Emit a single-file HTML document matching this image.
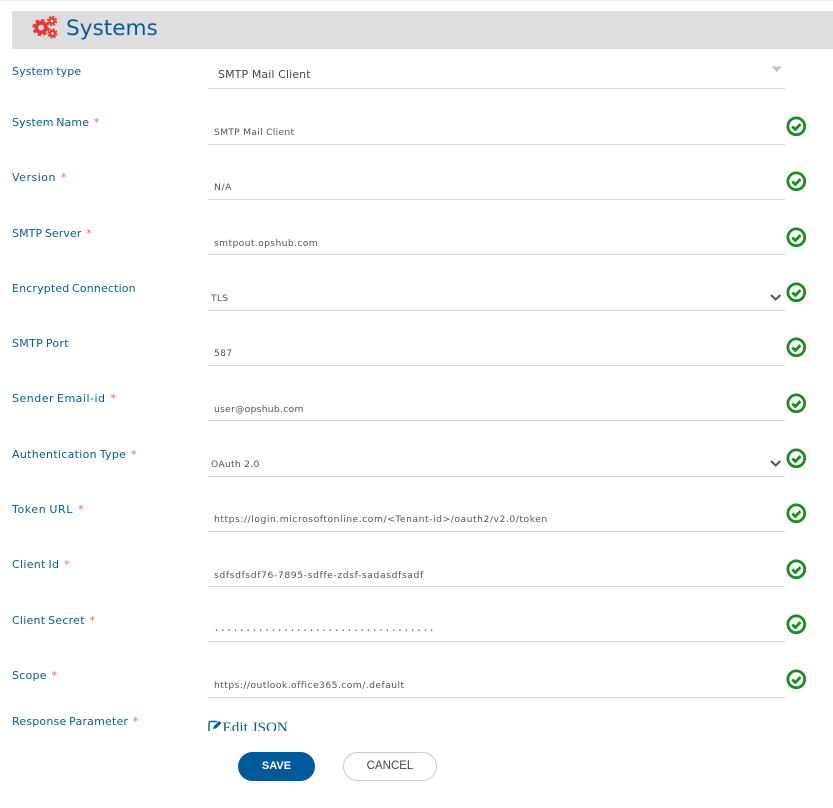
<!DOCTYPE html>
<html><head><meta charset="utf-8">
<style>
html,body{margin:0;padding:0;background:#fff;width:833px;height:808px;overflow:hidden}
body{position:relative;font-family:"DejaVu Sans","Liberation Sans",sans-serif}
.a{position:absolute;white-space:nowrap}
.l{left:12px;font-size:11px;line-height:14px;color:#0d5a96;letter-spacing:.1px;word-spacing:-1px}
.l b{font-weight:normal;color:#e66;margin-left:2px}
.v{left:214px;font-size:9.2px;line-height:12px;color:#555;letter-spacing:.27px}
.s{left:208px;width:577px;height:1px;background:#d6d6d6}
.c{left:786px;width:21px;height:21px}
.d{left:769px;width:14px;height:9px}
</style></head><body>
<div class="a" style="left:0;top:0;width:833px;height:1px;background:#eee"></div>
<div class="a" style="left:12px;top:11px;width:821px;height:38px;background:#dedede"></div>
<svg class="a" style="left:30px;top:14px" width="32" height="28" viewBox="0 0 32 28" fill="none" stroke="#e53935">
<circle cx="11" cy="13.5" r="4.8" stroke-width="3.8"/><circle cx="11" cy="13.5" r="7.4" stroke-width="2.4" stroke-dasharray="3.3 2.5"/>
<circle cx="22" cy="7" r="2.5" stroke-width="2.2"/><circle cx="22" cy="7" r="4.3" stroke-width="1.6" stroke-dasharray="2.1 1.3"/>
<circle cx="22.5" cy="19.5" r="2.5" stroke-width="2.2"/><circle cx="22.5" cy="19.5" r="4.3" stroke-width="1.6" stroke-dasharray="2.1 1.3"/>
</svg>
<div class="a" style="left:66px;top:14px;font-size:21.6px;line-height:30px;color:#0d5a96;font-family:'DejaVu Sans',sans-serif">Systems</div>

<div class="a l" style="top:65px">System type</div>
<div class="a" style="left:218px;top:68px;font-size:11px;line-height:14px;color:#444;letter-spacing:.1px">SMTP Mail Client</div>
<svg class="a" style="left:771px;top:66px" width="12" height="7"><path d="M0.5 0.5H11L5.7 6Z" fill="#c4c4c4"/></svg>
<div class="a s" style="top:88px"></div>

<div class="a l" style="top:116px">System Name <b>*</b></div>
<div class="a v" style="top:127px">SMTP Mail Client</div>
<div class="a s" style="top:144px"></div>
<svg class="a c" style="top:116px" viewBox="0 0 21 21"><circle cx="10.3" cy="10.3" r="8.4" fill="#fff" stroke="#1e8a24" stroke-width="2.8"/><path d="M6.3 10.5l3 3 5.2-5.4" fill="none" stroke="#1e8a24" stroke-width="2.8"/></svg>

<div class="a l" style="top:171px;letter-spacing:.5px">Version <b>*</b></div>
<div class="a v" style="top:182px;letter-spacing:.6px">N/A</div>
<div class="a s" style="top:199px"></div>
<svg class="a c" style="top:171px" viewBox="0 0 21 21"><circle cx="10.3" cy="10.3" r="8.4" fill="#fff" stroke="#1e8a24" stroke-width="2.8"/><path d="M6.3 10.5l3 3 5.2-5.4" fill="none" stroke="#1e8a24" stroke-width="2.8"/></svg>

<div class="a l" style="top:227px">SMTP Server <b>*</b></div>
<div class="a v" style="top:238px;letter-spacing:.37px">smtpout.opshub.com</div>
<div class="a s" style="top:254px"></div>
<svg class="a c" style="top:227px" viewBox="0 0 21 21"><circle cx="10.3" cy="10.3" r="8.4" fill="#fff" stroke="#1e8a24" stroke-width="2.8"/><path d="M6.3 10.5l3 3 5.2-5.4" fill="none" stroke="#1e8a24" stroke-width="2.8"/></svg>

<div class="a l" style="top:282px;letter-spacing:.15px">Encrypted Connection</div>
<div class="a v" style="top:293px;left:211px">TLS</div>
<svg class="a d" style="top:293px" viewBox="0 0 14 9"><path d="M2 2l4.7 4.5L11.4 2" fill="none" stroke="#555" stroke-width="2"/></svg>
<div class="a s" style="top:310px"></div>
<svg class="a c" style="top:282px" viewBox="0 0 21 21"><circle cx="10.3" cy="10.3" r="8.4" fill="#fff" stroke="#1e8a24" stroke-width="2.8"/><path d="M6.3 10.5l3 3 5.2-5.4" fill="none" stroke="#1e8a24" stroke-width="2.8"/></svg>

<div class="a l" style="top:337px;letter-spacing:.3px">SMTP Port</div>
<div class="a v" style="top:348px">587</div>
<div class="a s" style="top:365px"></div>
<svg class="a c" style="top:337px" viewBox="0 0 21 21"><circle cx="10.3" cy="10.3" r="8.4" fill="#fff" stroke="#1e8a24" stroke-width="2.8"/><path d="M6.3 10.5l3 3 5.2-5.4" fill="none" stroke="#1e8a24" stroke-width="2.8"/></svg>

<div class="a l" style="top:392px;letter-spacing:.5px">Sender Email-id <b>*</b></div>
<div class="a v" style="top:404px;letter-spacing:.28px">user@opshub.com</div>
<div class="a s" style="top:420px"></div>
<svg class="a c" style="top:393px" viewBox="0 0 21 21"><circle cx="10.3" cy="10.3" r="8.4" fill="#fff" stroke="#1e8a24" stroke-width="2.8"/><path d="M6.3 10.5l3 3 5.2-5.4" fill="none" stroke="#1e8a24" stroke-width="2.8"/></svg>

<div class="a l" style="top:448px;letter-spacing:.3px">Authentication Type <b>*</b></div>
<div class="a v" style="top:459px;left:211px">OAuth 2.0</div>
<svg class="a d" style="top:459px" viewBox="0 0 14 9"><path d="M2 2l4.7 4.5L11.4 2" fill="none" stroke="#555" stroke-width="2"/></svg>
<div class="a s" style="top:476px"></div>
<svg class="a c" style="top:448px" viewBox="0 0 21 21"><circle cx="10.3" cy="10.3" r="8.4" fill="#fff" stroke="#1e8a24" stroke-width="2.8"/><path d="M6.3 10.5l3 3 5.2-5.4" fill="none" stroke="#1e8a24" stroke-width="2.8"/></svg>

<div class="a l" style="top:503px;letter-spacing:.6px">Token URL <b>*</b></div>
<div class="a v" style="top:514px;letter-spacing:.54px">https://login.microsoftonline.com/&lt;Tenant-id&gt;/oauth2/v2.0/token</div>
<div class="a s" style="top:531px"></div>
<svg class="a c" style="top:503px" viewBox="0 0 21 21"><circle cx="10.3" cy="10.3" r="8.4" fill="#fff" stroke="#1e8a24" stroke-width="2.8"/><path d="M6.3 10.5l3 3 5.2-5.4" fill="none" stroke="#1e8a24" stroke-width="2.8"/></svg>

<div class="a l" style="top:558px;letter-spacing:.3px">Client Id <b>*</b></div>
<div class="a v" style="top:570px;letter-spacing:.61px">sdfsdfsdf76-7895-sdffe-zdsf-sadasdfsadf</div>
<div class="a s" style="top:586px"></div>
<svg class="a c" style="top:559px" viewBox="0 0 21 21"><circle cx="10.3" cy="10.3" r="8.4" fill="#fff" stroke="#1e8a24" stroke-width="2.8"/><path d="M6.3 10.5l3 3 5.2-5.4" fill="none" stroke="#1e8a24" stroke-width="2.8"/></svg>

<div class="a l" style="top:614px;letter-spacing:.25px">Client Secret <b>*</b></div>
<div class="a" style="left:215px;top:625px;font-size:5px;line-height:12px;color:#555;letter-spacing:3.38px">•••••••••••••••••••••••••••••••••••</div>
<div class="a s" style="top:641px"></div>
<svg class="a c" style="top:614px" viewBox="0 0 21 21"><circle cx="10.3" cy="10.3" r="8.4" fill="#fff" stroke="#1e8a24" stroke-width="2.8"/><path d="M6.3 10.5l3 3 5.2-5.4" fill="none" stroke="#1e8a24" stroke-width="2.8"/></svg>

<div class="a l" style="top:669px;letter-spacing:.25px">Scope <b>*</b></div>
<div class="a v" style="top:680px;letter-spacing:.44px">https://outlook.office365.com/.default</div>
<div class="a s" style="top:697px"></div>
<svg class="a c" style="top:669px" viewBox="0 0 21 21"><circle cx="10.3" cy="10.3" r="8.4" fill="#fff" stroke="#1e8a24" stroke-width="2.8"/><path d="M6.3 10.5l3 3 5.2-5.4" fill="none" stroke="#1e8a24" stroke-width="2.8"/></svg>

<div class="a l" style="top:715px;letter-spacing:.2px">Response Parameter <b>*</b></div>
<div class="a" style="left:208px;top:716px;width:100px;height:15px;overflow:hidden">
<svg class="a" style="left:0;top:4px" width="16" height="14" viewBox="0 0 16 14"><path d="M9 1.5H2.5Q1 1.5 1 3V14" fill="none" stroke="#0d5a96" stroke-width="1.4"/><path d="M5 9l1-3 5-5 2.4 2.2-5.2 5.2z" fill="#0d5a96"/></svg>
<div class="a" style="left:14.5px;top:3px;font-family:'Liberation Serif',serif;font-size:15.2px;line-height:17px;color:#0d5a96">Edit JSON</div>
</div>

<div class="a" style="left:238px;top:752px;width:77px;height:29px;border-radius:15px;background:#005a9a;color:#fff;font-size:11px;font-weight:bold;line-height:28px;text-align:center;font-family:'Liberation Sans',sans-serif">SAVE</div>
<div class="a" style="left:343px;top:752px;width:92px;height:27px;border:1px solid #ccc;border-radius:15px;background:#fff;color:#444;font-size:11.5px;line-height:27px;text-align:center;font-family:'Liberation Sans',sans-serif">CANCEL</div>
</body></html>
